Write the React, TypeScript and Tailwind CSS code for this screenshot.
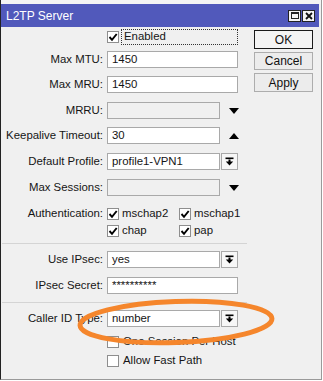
import React from "react";

const T = "text-[11.4px] leading-none text-[#151515]";

const Check = ({ checked }: { checked?: boolean }) => (
  <span className="w-[12px] h-[12px] border border-[#8e8e8e] bg-white flex items-center justify-center shrink-0">
    {checked && (
      <svg width="10" height="10" viewBox="0 0 10 10">
        <path d="M1.5 5 L4 7.8 L8.7 2" stroke="#000" strokeWidth="1.9" fill="none" />
      </svg>
    )}
  </span>
);

const Label = ({ children }: { children: React.ReactNode }) => (
  <div className={`w-[102px] shrink-0 text-right whitespace-nowrap ${T}`}>{children}</div>
);

const Input = ({ value, w, disabled }: { value?: string; w: string; disabled?: boolean }) => (
  <div
    className={`${w} h-full border border-[#a9a9a9] ${disabled ? "bg-[#f0f0f0]" : "bg-white"} flex items-center pl-[4px] shrink-0 ${T}`}
  >
    {value}
  </div>
);

const DropBtn = () => (
  <div className="w-[17px] h-full border border-[#a9a9a9] bg-[#f7f7f7] flex items-center justify-center shrink-0">
    <svg width="9" height="9" viewBox="0 0 9 9">
      <rect x="0.5" y="0.5" width="8" height="1.6" fill="#000" />
      <rect x="3.5" y="2.5" width="2" height="2.5" fill="#000" />
      <path d="M0.8 4.6 L8.2 4.6 L4.5 8.4 Z" fill="#000" />
    </svg>
  </div>
);

const Arrow = ({ up }: { up?: boolean }) => (
  <div className="w-[19px] h-full flex items-center justify-center shrink-0">
    <svg width="10" height="6" viewBox="0 0 10 6">
      {up ? <path d="M0 6 L10 6 L5 0 Z" fill="#000" /> : <path d="M0 0 L10 0 L5 6 Z" fill="#000" />}
    </svg>
  </div>
);

const Btn = ({ children, focus, h }: { children: React.ReactNode; focus?: boolean; h: string }) => (
  <div
    className={`w-[59px] ${h} flex items-center justify-center text-[12px] leading-none text-[#111] ${
      focus ? "border border-[#1a1a1a] bg-[#f4f4f4]" : "border border-[#adadad] bg-[#ececec]"
    }`}
  >
    {children}
  </div>
);

export default function App() {
  return (
    <div className="relative w-[323px] h-[381px] bg-white overflow-hidden font-['Liberation_Sans',Arial,sans-serif]">
      <div className="w-[322px] h-[380px] bg-[#f0f0f0] border-l border-l-[#222] border-r border-r-[#9a9a9a] border-b border-b-[#9a9a9a] flex flex-col">
        <div className="h-[4px] bg-[#f4f4f4] shrink-0" />
        <div className="h-[23px] mr-[2px] bg-[#5159bb] flex items-center shrink-0 relative">
          <span className="ml-[5px] text-white text-[12px] leading-none">L2TP Server</span>
          <div className="ml-auto mr-[4px] flex">
            <div className="w-[13px] h-[12px] bg-[#f4f4f4] border border-[#222] flex items-center justify-center">
              <span className="w-[8px] h-[7px] border border-[#222] border-t-2" />
            </div>
            <div className="w-[13px] h-[12px] ml-[1px] bg-[#f4f4f4] border border-[#222] flex items-center justify-center">
              <svg width="8" height="8" viewBox="0 0 8 8">
                <path d="M1 1 L7 7 M7 1 L1 7" stroke="#111" strokeWidth="1.8" />
              </svg>
            </div>
          </div>
        </div>
        <div className="flex flex-1">
          <div className="w-[246px] flex flex-col">
            <div className="mt-[2px] h-[16px] flex items-center">
              <div className="w-[106px] shrink-0" />
              <Check checked />
              <div className={`ml-[2px] w-[117px] h-full border border-dotted border-[#333] flex items-center pl-[2px] ${T}`}>
                Enabled
              </div>
            </div>
            <div className="mt-[6px] h-[17px] flex items-center gap-[4px]">
              <Label>Max MTU:</Label>
              <Input value="1450" w="w-[131px]" />
            </div>
            <div className="mt-[8px] h-[17px] flex items-center gap-[4px]">
              <Label>Max MRU:</Label>
              <Input value="1450" w="w-[131px]" />
            </div>
            <div className="mt-[9px] h-[17px] flex items-center gap-[4px]">
              <Label>MRRU:</Label>
              <Input w="w-[113px]" disabled />
              <Arrow />
            </div>
            <div className="mt-[8px] h-[17px] flex items-center gap-[4px]">
              <Label>Keepalive Timeout:</Label>
              <Input value="30" w="w-[113px]" />
              <Arrow up />
            </div>
            <div className="mt-[9px] h-[17px] flex items-center gap-[4px]">
              <Label>Default Profile:</Label>
              <div className="flex h-full gap-[1px]">
                <Input value="profile1-VPN1" w="w-[113px]" />
                <DropBtn />
              </div>
            </div>
            <div className="mt-[9px] h-[17px] flex items-center gap-[4px]">
              <Label>Max Sessions:</Label>
              <Input w="w-[113px]" disabled />
              <Arrow />
            </div>
            <div className="mt-[9px] h-[17px] flex items-center gap-[4px]">
              <Label>Authentication:</Label>
              <div className="flex items-center">
                <Check checked />
                <span className={`ml-[3px] w-[57px] ${T}`}>mschap2</span>
                <Check checked />
                <span className={`ml-[3px] ${T}`}>mschap1</span>
              </div>
            </div>
            <div className="h-[17px] flex items-center gap-[4px]">
              <div className="w-[102px] shrink-0" />
              <div className="flex items-center">
                <Check checked />
                <span className={`ml-[3px] w-[57px] ${T}`}>chap</span>
                <Check checked />
                <span className={`ml-[3px] ${T}`}>pap</span>
              </div>
            </div>
            <div className="mt-[4px] h-[1px] bg-[#d4d4d4] ml-[1px]" />
            <div className="mt-[7px] h-[17px] flex items-center gap-[4px]">
              <Label>Use IPsec:</Label>
              <div className="flex h-full gap-[1px]">
                <Input value="yes" w="w-[113px]" />
                <DropBtn />
              </div>
            </div>
            <div className="mt-[9px] h-[17px] flex items-center gap-[4px]">
              <Label>IPsec Secret:</Label>
              <Input value="**********" w="w-[131px]" />
            </div>
            <div className="mt-[8px] h-[1px] bg-[#d4d4d4] ml-[1px]" />
            <div className="mt-[7px] h-[17px] flex items-center gap-[4px]">
              <Label>Caller ID Type:</Label>
              <div className="flex h-full gap-[1px]">
                <Input value="number" w="w-[113px]" />
                <DropBtn />
              </div>
            </div>
            <div className="mt-[6px] h-[17px] flex items-center">
              <div className="w-[106px] shrink-0" />
              <Check />
              <span className={`ml-[4px] ${T}`}>One Session Per Host</span>
            </div>
            <div className="mt-[2px] h-[17px] flex items-center">
              <div className="w-[106px] shrink-0" />
              <Check />
              <span className={`ml-[4px] ${T}`}>Allow Fast Path</span>
            </div>
          </div>
          <div className="ml-[7px] mt-[3px] flex flex-col gap-[3px]">
            <Btn focus h="h-[19px]">OK</Btn>
            <Btn h="h-[18px]">Cancel</Btn>
            <Btn h="h-[19px]">Apply</Btn>
          </div>
        </div>
      </div>
      <svg className="absolute inset-0 pointer-events-none" width="323" height="381">
        <ellipse
          cx="176"
          cy="322"
          rx="96"
          ry="20.5"
          fill="none"
          stroke="#f5862c"
          strokeWidth="5"
          transform="rotate(-2 176 322)"
        />
      </svg>
    </div>
  );
}
